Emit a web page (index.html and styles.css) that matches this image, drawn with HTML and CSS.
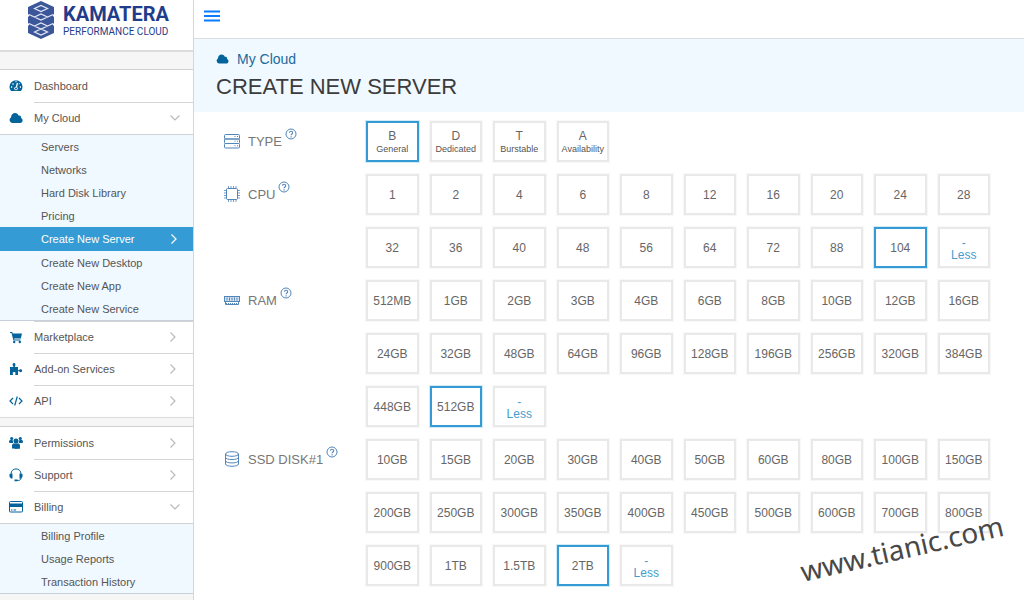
FILE: index.html
```html
<!DOCTYPE html>
<html lang="en">
<head>
<meta charset="utf-8">
<title>Create New Server</title>
<link rel="stylesheet" href="styles.css">
</head>
<body>
<svg class="defs" width="0" height="0" aria-hidden="true">
  <symbol id="cloud" viewBox="0 0 28 22"><path d="M6 21a6 6 0 0 1-2-11C4 4 8 1 12 1c4 0 6 2 7 5 4-1 6 2 5 5 5 2 4 10-2 10z" fill="currentColor"/></symbol>
  <symbol id="right" viewBox="0 0 8 12"><path d="M1.500 1.500 6 6l-4.500 4.500" fill="none" stroke="currentColor" stroke-width="1.200"/></symbol>
  <symbol id="down" viewBox="0 0 12 8"><path d="M1.500 1.500 6 6l4.500-4.500" fill="none" stroke="currentColor" stroke-width="1.200"/></symbol>
  <symbol id="help" viewBox="0 0 12 12"><circle cx="6" cy="6" r="5" fill="none" stroke="currentColor"/><path d="M4.500 4.700c0-2 3.200-2 3.200 0C7.700 6 6.100 5.900 6.100 7.200M6.100 8.200v1.200" fill="none" stroke="currentColor" stroke-width="1.100"/></symbol>
</svg>
<div class="app">
  <aside class="sidebar">
    <a class="logo" href="#">
      <svg class="logo-mark" viewBox="0 0 28 38" aria-hidden="true">
        <path fill="#3c5799" d="M14 0 27 6v7l-1.500 1.500L27 16v6l-1.500 1.500L27 25v7l-13 6-13-6v-7l1.500-1.500L1 22v-6l1.500-1.500L1 13V6z"/>
        <g fill="none" stroke="#e3e8f5" stroke-width="1.200"><path d="M7.500 7.500 14 4.500l6.500 3L14 10.500zM2 13.500l12 5.500 12-5.500M7.500 16l6.500-3 6.500 3M2 22.500 14 28l12-5.500M7.500 25l6.500-3 6.500 3M7.500 31l6.500-3 6.500 3-6.500 3z"/></g>
      </svg>
      <span class="logo-text"><strong>KAMATERA</strong><span>PERFORMANCE CLOUD</span></span>
    </a>
    <div class="band band-top"></div>
    <nav>
      <ul class="menu">
        <li><a class="item" href="#"><svg class="icon" viewBox="0 0 14 14"><path d="M2 12a6.500 6.500 0 1 1 10 0z" fill="currentColor"/><path d="M7 9.500 8.500 4M2 8h1.200M10.800 8H12M3.500 4.500l1 1M6.500 2.500h1M10 4.500l.5.500" stroke="#fff" stroke-width="1.300"/><circle cx="7" cy="9.500" r="1.800" fill="#fff"/><circle cx="7" cy="9.500" r="1" fill="currentColor"/></svg><span>Dashboard</span></a></li>
        <li><a class="item" href="#"><svg class="icon"><use href="#cloud"/></svg><span>My Cloud</span><svg class="down"><use href="#down"/></svg></a>
          <ul class="sub">
            <li><a href="#">Servers</a></li>
            <li><a href="#">Networks</a></li>
            <li><a href="#">Hard Disk Library</a></li>
            <li><a href="#">Pricing</a></li>
            <li><a class="active" href="#">Create New Server<svg class="right"><use href="#right"/></svg></a></li>
            <li><a href="#">Create New Desktop</a></li>
            <li><a href="#">Create New App</a></li>
            <li><a href="#">Create New Service</a></li>
          </ul></li>
        <li><a class="item" href="#"><svg class="icon" viewBox="0 0 14 14"><path d="M1 2h2.300l.4 1.500H13l-1.200 5H5l.3 1h6.200v1H4.400L2.500 3H1z" fill="currentColor"/><circle cx="5.200" cy="12" r="1.200" fill="currentColor"/><circle cx="10.800" cy="12" r="1.200" fill="currentColor"/></svg><span>Marketplace</span><svg class="right"><use href="#right"/></svg></a></li>
        <li><a class="item" href="#"><svg class="icon" viewBox="0 0 14 14"><path d="M1 5h3.500C3 2.500 3.500 1 5 1s2 1.500.800 4H9v3.500c2-.7 2-1.500 3.500-1 .8.300.8 2.200 0 2.500-1.500.500-1.500-.5-3.500-1V13H6.200c.6-2.500.3-3-1.200-3s-1.500.800-1 3H1z" fill="currentColor"/></svg><span>Add-on Services</span><svg class="right"><use href="#right"/></svg></a></li>
        <li><a class="item" href="#"><svg class="icon" viewBox="0 0 14 14"><path d="M4 4 1 7l3 3M10 4l3 3-3 3M8.300 2.500l-2.600 9" fill="none" stroke="currentColor" stroke-width="1.200"/></svg><span>API</span><svg class="right"><use href="#right"/></svg></a></li>
      </ul>
      <div class="band band-mid"></div>
      <ul class="menu">
        <li><a class="item" href="#"><svg class="icon" viewBox="0 0 14 14"><g fill="currentColor"><circle cx="7" cy="5" r="2.500"/><circle cx="2.700" cy="2.500" r="1.600"/><circle cx="11.300" cy="2.500" r="1.600"/><path d="M3 12.500V10c0-2 1-2.500 2-2.500h4c1 0 2 .5 2 2.500v2.500c0 .500-8 .500-8 0zM0 6.500c0-3 1.500-2.500 4-2L4 7H1zM14 6.500c0-3-1.500-2.500-4-2L10 7h3z"/></g></svg><span>Permissions</span><svg class="right"><use href="#right"/></svg></a></li>
        <li><a class="item" href="#"><svg class="icon" viewBox="0 0 14 14"><path d="M2 6C2-.8 12-.8 12 6M12 10c0 2-1.500 2.500-4 2.500" fill="none" stroke="currentColor"/><path d="M.5 6l3-.5v5H2L.5 8.800zM13.500 6l-3-.5v5H12l1.500-1.700zM5.500 11.500h3v1.700h-3z" fill="currentColor"/></svg><span>Support</span><svg class="right"><use href="#right"/></svg></a></li>
        <li><a class="item" href="#"><svg class="icon" viewBox="0 0 14 14"><rect x=".5" y="1.500" width="13" height="10.500" rx="1" fill="none" stroke="currentColor"/><path d="M0 3.500h14v3.500H0zM2 9.500h1.500v1H2zM4.500 9.500H7v1H4.500z" fill="currentColor"/></svg><span>Billing</span><svg class="down"><use href="#down"/></svg></a>
          <ul class="sub">
            <li><a href="#">Billing Profile</a></li>
            <li><a href="#">Usage Reports</a></li>
            <li><a href="#">Transaction History</a></li>
          </ul></li>
      </ul>
    </nav>
  </aside>
  <main class="main">
    <div class="topbar"><button class="burger" type="button" aria-label="Toggle menu"><svg viewBox="0 0 16 12"><path d="M0 1.500h16M0 6h16M0 10.500h16" stroke="#0a7cff" stroke-width="2"/></svg></button></div>
    <header class="head">
      <a class="crumb" href="#"><svg><use href="#cloud"/></svg>My Cloud</a>
      <h1>CREATE NEW SERVER</h1>
    </header>
    <form class="form">
      <section class="row" aria-label="Type">
        <h2 class="label"><svg class="spec" viewBox="0 0 16 16"><g fill="none" stroke="currentColor"><rect x=".5" y="1.500" width="15" height="4.500" rx="1"/><rect x=".5" y="6" width="15" height="4.500" rx="1"/><rect x=".5" y="10.500" width="15" height="4.500" rx="1"/><path d="M10.500 3.500h1M13 3.500h1M10.500 8.200h1M13 8.200h1M10.500 12.800h1M13 12.800h1"/></g></svg>TYPE<svg class="help"><use href="#help"/></svg></h2>
        <div class="tiles">
          <button type="button" class="tile selected" aria-pressed="true">B<small>General</small></button>
          <button type="button" class="tile">D<small>Dedicated</small></button>
          <button type="button" class="tile">T<small>Burstable</small></button>
          <button type="button" class="tile">A<small>Availability</small></button>
        </div>
      </section>
      <section class="row" aria-label="CPU">
        <h2 class="label"><svg class="spec" viewBox="0 0 16 16"><g fill="none" stroke="currentColor"><rect x="2.500" y="2.500" width="11" height="11" rx="1"/><path d="M4.500 0v2M7 0v2M9.500 0v2M12 0v2M4.500 14v2M7 14v2M9.500 14v2M12 14v2M0 4.500h2M0 7h2M0 9.500h2M0 12h2M14 4.500h2M14 7h2M14 9.500h2M14 12h2" opacity=".8"/></g></svg>CPU<svg class="help"><use href="#help"/></svg></h2>
        <div class="tiles">
          <button type="button" class="tile">1</button><button type="button" class="tile">2</button><button type="button" class="tile">4</button><button type="button" class="tile">6</button><button type="button" class="tile">8</button><button type="button" class="tile">12</button><button type="button" class="tile">16</button><button type="button" class="tile">20</button><button type="button" class="tile">24</button><button type="button" class="tile">28</button>
          <button type="button" class="tile">32</button><button type="button" class="tile">36</button><button type="button" class="tile">40</button><button type="button" class="tile">48</button><button type="button" class="tile">56</button><button type="button" class="tile">64</button><button type="button" class="tile">72</button><button type="button" class="tile">88</button><button type="button" class="tile selected" aria-pressed="true">104</button><button type="button" class="tile less"><span>-</span><span>Less</span></button>
        </div>
      </section>
      <section class="row" aria-label="RAM">
        <h2 class="label"><svg class="spec" viewBox="0 0 16 16"><g fill="none" stroke="currentColor"><rect x=".5" y="4.500" width="15" height="5" fill="#d5e3f1"/><path d="M3 5.500v3M5.500 5.500v3M8 5.500v3M10.500 5.500v3M13 5.500v3M1.500 10v2.500h13V10"/><path d="M2 11.500h12" stroke-dasharray="1 1"/></g></svg>RAM<svg class="help"><use href="#help"/></svg></h2>
        <div class="tiles">
          <button type="button" class="tile">512MB</button><button type="button" class="tile">1GB</button><button type="button" class="tile">2GB</button><button type="button" class="tile">3GB</button><button type="button" class="tile">4GB</button><button type="button" class="tile">6GB</button><button type="button" class="tile">8GB</button><button type="button" class="tile">10GB</button><button type="button" class="tile">12GB</button><button type="button" class="tile">16GB</button>
          <button type="button" class="tile">24GB</button><button type="button" class="tile">32GB</button><button type="button" class="tile">48GB</button><button type="button" class="tile">64GB</button><button type="button" class="tile">96GB</button><button type="button" class="tile">128GB</button><button type="button" class="tile">196GB</button><button type="button" class="tile">256GB</button><button type="button" class="tile">320GB</button><button type="button" class="tile">384GB</button>
          <button type="button" class="tile">448GB</button><button type="button" class="tile selected" aria-pressed="true">512GB</button><button type="button" class="tile less"><span>-</span><span>Less</span></button>
        </div>
      </section>
      <section class="row" aria-label="SSD disk 1">
        <h2 class="label"><svg class="spec" viewBox="0 0 16 16"><g fill="none" stroke="currentColor"><ellipse cx="8" cy="3" rx="6.500" ry="2.300"/><path d="M1.500 3v10c0 3 13 3 13 0V3M1.500 6.300c0 3 13 3 13 0M1.500 9.700c0 3 13 3 13 0"/></g></svg>SSD DISK#1<svg class="help"><use href="#help"/></svg></h2>
        <div class="tiles">
          <button type="button" class="tile">10GB</button><button type="button" class="tile">15GB</button><button type="button" class="tile">20GB</button><button type="button" class="tile">30GB</button><button type="button" class="tile">40GB</button><button type="button" class="tile">50GB</button><button type="button" class="tile">60GB</button><button type="button" class="tile">80GB</button><button type="button" class="tile">100GB</button><button type="button" class="tile">150GB</button>
          <button type="button" class="tile">200GB</button><button type="button" class="tile">250GB</button><button type="button" class="tile">300GB</button><button type="button" class="tile">350GB</button><button type="button" class="tile">400GB</button><button type="button" class="tile">450GB</button><button type="button" class="tile">500GB</button><button type="button" class="tile">600GB</button><button type="button" class="tile">700GB</button><button type="button" class="tile">800GB</button>
          <button type="button" class="tile">900GB</button><button type="button" class="tile">1TB</button><button type="button" class="tile">1.5TB</button><button type="button" class="tile selected" aria-pressed="true">2TB</button><button type="button" class="tile less"><span>-</span><span>Less</span></button>
        </div>
      </section>
    </form>
    <div class="watermark">www.tianic.com</div>
  </main>
</div>
</body>
</html>
```
FILE: styles.css
```css
* { box-sizing: border-box; }
body { margin: 0; background: #fff; color: #555; font-family: "Liberation Sans", Arial, sans-serif; font-size: 11px; }
ul { list-style: none; margin: 0; padding: 0; }
a { color: inherit; text-decoration: none; }
.defs { position: absolute; }
.app { display: flex; min-height: 100vh; }

.sidebar { flex: 0 0 194px; background: #f6f6f6; border-right: 1px solid #d4d6d8; }
.logo { display: flex; gap: 8px; height: 50px; padding: 1px 0 0 27px; background: #fff; color: #1f3d8a; }
.logo-mark { width: 28px; height: 38px; }
.logo-text { display: flex; flex-direction: column; padding-top: 1px; font-family: Roboto, sans-serif; font-size: 10px; line-height: 12px; }
.logo-text strong { font-size: 20px; line-height: 24px; font-weight: 700; }
.band { background: #f6f6f6; border-top: 2px solid #dcdcdc; border-bottom: 1px solid #d0d0d0; }
.band-top { height: 20px; }
.band-mid { height: 10px; border-top-width: 1px; }
.menu { background: #fff; }
.item { display: flex; align-items: center; height: 32px; padding-left: 9px; }
.item span { flex: 1; margin-left: 11px; }
.menu > li + li > .item { background: linear-gradient(#d4d4d4, #d4d4d4) 34px 0 / 100% 1px no-repeat; }
.sub { background: #f0f9ff; border-top: 1px solid #cfd3d6; border-bottom: 1px solid #c5d0da; }
.sub a { display: flex; align-items: center; justify-content: space-between; height: 23px; padding-left: 41px; }
.sub .active { height: 24px; background: #359bd5; color: #fff; }
.icon { width: 14px; height: 14px; color: #03639b; }
.right { width: 8px; height: 12px; margin-right: 16px; color: #bbb; }
.down { width: 12px; height: 8px; margin-right: 12px; color: #bbb; }
.active .right { margin-right: 15px; color: #fff; }

.main { position: relative; flex: 1; min-width: 0; }
.topbar { height: 39px; padding: 10px 0 0 10px; border-bottom: 1px solid #d9dde0; }
.burger { display: block; padding: 0; border: 0; background: none; }
.burger svg { display: block; width: 16px; height: 12px; }
.head { height: 73px; padding: 12px 22px 0; background: #f0f9ff; }
.crumb { display: flex; align-items: center; gap: 8px; color: #1b6a9c; font-size: 14px; line-height: 16px; }
.crumb svg { width: 13px; height: 10px; color: #03639b; }
h1 { margin: 7px 0 0; color: #3c3c3c; font-size: 22px; line-height: 26px; font-weight: 400; }
.form { display: grid; gap: 12px; padding: 9px 34px 14px 30px; }
.row { display: grid; grid-template-columns: 142px 1fr; }
.label { display: flex; align-items: center; height: 40px; margin: 0; color: #777; font-size: 13px; font-weight: 400; }
.spec { width: 16px; height: 16px; margin-right: 8px; color: #5286b8; }
.help { width: 12px; height: 12px; margin: 0 0 14px 3px; color: #5286b8; }
.tiles { display: grid; grid-template-columns: repeat(10, 1fr); gap: 12px 11px; }
.tile { display: flex; flex-direction: column; align-items: center; justify-content: center; min-width: 0; height: 41px; padding: 0; border: 2px solid #e9e9e9; background: #fff; box-shadow: 0 0 0 1px #f8f8f8; color: #666; font: 12px/14px "Liberation Sans", Arial, sans-serif; }
.tile small { color: #555; font-size: 9px; line-height: 12px; }
.selected { border-color: #359bd5; box-shadow: 0 0 0 1px #d3eaf7; }
.less { padding-top: 3px; color: #469dd0; line-height: 12px; }
.watermark { position: absolute; right: 19px; top: 528px; color: #484848; font: 28px/40px "Noto Sans", sans-serif; transform: rotate(-13deg); pointer-events: none; }
```
